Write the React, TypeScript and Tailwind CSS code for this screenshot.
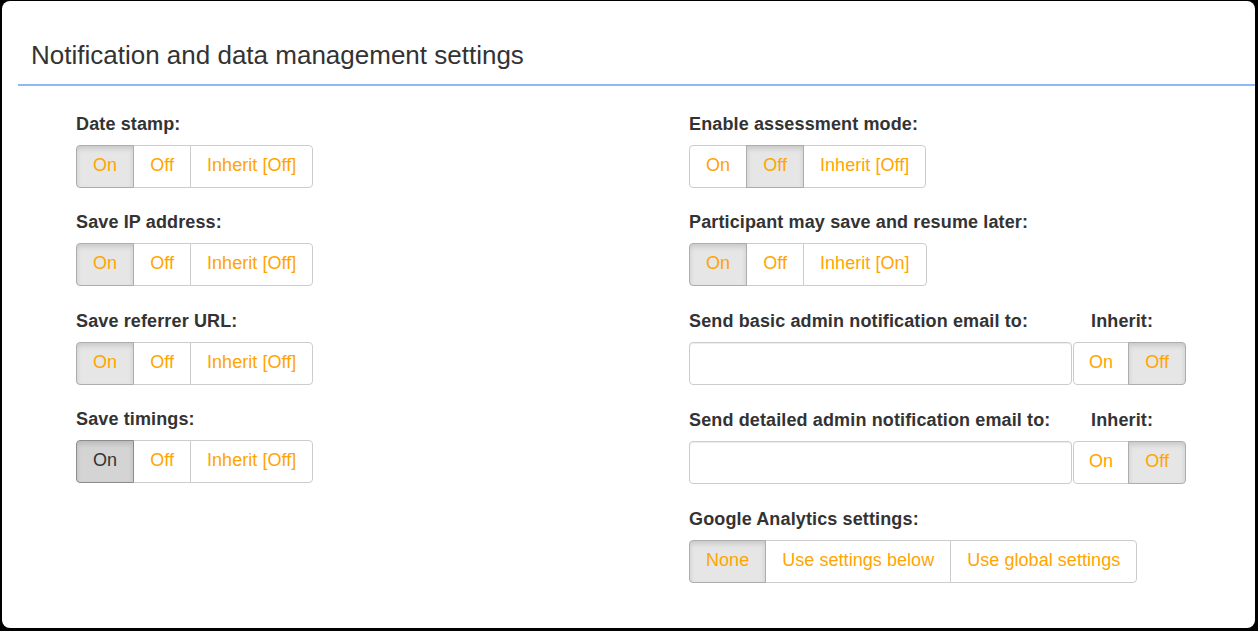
import React from "react";

type Opt = { label: string; active?: boolean; pressed?: boolean; px?: string };

function BtnGroup({ options }: { options: Opt[] }) {
  return (
    <div className="flex">
      {options.map((o, i) => {
        const first = i === 0;
        const last = i === options.length - 1;
        const base =
          "h-[43px] flex items-center pb-[3px] border text-[18px] leading-[24px] tracking-[0.05px] " +
          (o.px ?? "px-4") +
          (first ? " rounded-l-[4px]" : " -ml-px") +
          (last ? " rounded-r-[4px]" : "");
        let cls = base;
        if (o.pressed) {
          cls +=
            " bg-[#d4d4d4] border-[#8c8c8c] text-[#333] shadow-[inset_0_3px_5px_rgba(0,0,0,0.125)] relative z-10";
        } else if (o.active) {
          cls +=
            " bg-[#e6e6e6] border-[#adadad] text-[#ffa500] shadow-[inset_0_3px_5px_rgba(0,0,0,0.125)] relative z-10";
        } else {
          cls += " bg-white border-[#ccc] text-[#ffa500]";
        }
        return (
          <div key={i} className={cls}>
            {o.label}
          </div>
        );
      })}
    </div>
  );
}

function Label({ children }: { children: React.ReactNode }) {
  return (
    <div className="text-[18px] leading-[24px] font-bold text-[#333] tracking-[0.13px] mb-[9px] whitespace-nowrap">
      {children}
    </div>
  );
}

function Row({ label, options }: { label: string; options: Opt[] }) {
  return (
    <div className="flex flex-col items-start">
      <Label>{label}</Label>
      <BtnGroup options={options} />
    </div>
  );
}

function EmailRow({ label }: { label: string }) {
  return (
    <div className="flex flex-col items-start">
      <div className="flex">
        <div className="w-[384px]">
          <Label>{label}</Label>
        </div>
        <div className="pl-[18px]">
          <Label>Inherit:</Label>
        </div>
      </div>
      <div className="flex gap-[1px]">
        <div className="w-[383px] h-[43px] border border-[#ccc] rounded-[4px] bg-white shadow-[inset_0_1px_1px_rgba(0,0,0,0.075)]" />
        <BtnGroup
          options={[
            { label: "On", px: "px-[15px]" },
            { label: "Off", active: true, px: "px-[16px]" },
          ]}
        />
      </div>
    </div>
  );
}

export default function App() {
  return (
    <div
      className="w-[1258px] h-[631px] bg-black pt-[1px] pl-[2px] pr-[3px] pb-[3px]"
      style={{ fontFamily: '"Liberation Sans", Arial, Helvetica, sans-serif' }}
    >
      <div className="bg-white rounded-[8px] h-full">
        <div className="ml-[16px] border-b-2 border-[#8fb8f5] pl-[13px] pt-[40px] pb-[14px]">
          <div className="text-[26px] leading-[29px] text-[#333]">
            Notification and data management settings
          </div>
        </div>
        <div className="grid grid-cols-[613px_1fr] pl-[74px] pt-[26px]">
          <div className="flex flex-col gap-y-[22.33px]">
            <Row
              label="Date stamp:"
              options={[
                { label: "On", active: true },
                { label: "Off" },
                { label: "Inherit [Off]" },
              ]}
            />
            <Row
              label="Save IP address:"
              options={[
                { label: "On", active: true },
                { label: "Off" },
                { label: "Inherit [Off]" },
              ]}
            />
            <Row
              label="Save referrer URL:"
              options={[
                { label: "On", active: true },
                { label: "Off" },
                { label: "Inherit [Off]" },
              ]}
            />
            <Row
              label="Save timings:"
              options={[
                { label: "On", pressed: true },
                { label: "Off" },
                { label: "Inherit [Off]" },
              ]}
            />
          </div>
          <div className="flex flex-col gap-y-[22.33px]">
            <Row
              label="Enable assessment mode:"
              options={[
                { label: "On" },
                { label: "Off", active: true },
                { label: "Inherit [Off]" },
              ]}
            />
            <Row
              label="Participant may save and resume later:"
              options={[
                { label: "On", active: true },
                { label: "Off" },
                { label: "Inherit [On]" },
              ]}
            />
            <EmailRow label="Send basic admin notification email to:" />
            <div className="mt-[1px]">
              <EmailRow label="Send detailed admin notification email to:" />
            </div>
            <div className="mt-[1px]">
              <Row
                label="Google Analytics settings:"
                options={[
                  { label: "None", active: true },
                  { label: "Use settings below" },
                  { label: "Use global settings" },
                ]}
              />
            </div>
          </div>
        </div>
      </div>
    </div>
  );
}
